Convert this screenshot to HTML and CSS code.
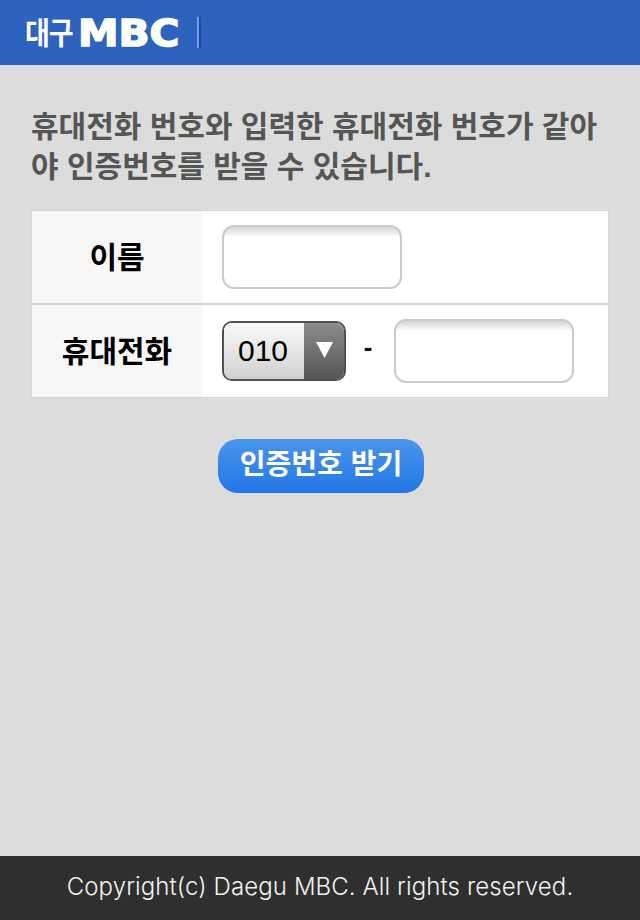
FILE: index.html
```html
<!DOCTYPE html>
<html lang="ko">
<head>
    <meta charset="UTF-8">
    <meta name="viewport" content="width=device-width, initial-scale=1.0">
    <title>대구MBC 인증번호</title>
    <link rel="stylesheet" href="styles.css">
</head>
<body>

    <div id="header">
        <div class="logo">
            <span class="logo-city">대구</span>
            <span class="logo-mbc">MBC</span>
        </div>
        <div class="logo-line"></div>
    </div>

    <div id="content">
        <p class="notice">휴대전화 번호와 입력한 휴대전화 번호가 같아야 인증번호를 받을 수 있습니다.</p>

        <div class="form-table">
            <div class="form-row">
                <div class="form-label">이름</div>
                <div class="form-field name-field">
                    <div class="text-input"></div>
                </div>
            </div>
            <div class="form-row">
                <div class="form-label">휴대전화</div>
                <div class="form-field phone-field">
                    <div class="select-box">
                        <span class="select-value">010</span>
                        <span class="select-arrow">
                            <svg width="17" height="16" viewBox="0 0 17 16"><polygon points="0,0 17,0 8.5,16" fill="#fff"/></svg>
                        </span>
                    </div>
                    <span class="dash">-</span>
                    <div class="text-input"></div>
                </div>
            </div>
        </div>

        <div class="actions">
            <a href="#" class="btn-auth">인증번호 받기</a>
        </div>
    </div>

    <div id="footer">Copyright(c) Daegu MBC. All rights reserved.</div>

</body>
</html>
```

FILE: styles.css
```css
html, body {
    height: 100%;
}

body {
    font-family: "Liberation Sans", "Noto Sans CJK KR", sans-serif;
    margin: 0;
    padding: 0;
    display: flex;
    flex-direction: column;
    background-color: #dcdcdc;
}

#header {
    height: 65px;
    background-color: #2d63bf;
    display: flex;
    align-items: center;
    padding-left: 25px;
    flex-shrink: 0;
}

.logo {
    display: flex;
    align-items: center;
    color: #fff;
    height: 30px;
    width: 172px;
}

.logo-city {
    font-size: 27px;
    font-weight: bold;
    letter-spacing: -1px;
    line-height: 30px;
    width: 53px;
    margin-top: 2px;
    transform: scaleY(1.15);
}

.logo-mbc {
    font-family: "DejaVu Sans", sans-serif;
    font-size: 37px;
    font-weight: bold;
    line-height: 30px;
    display: block;
    margin-top: 3px;
    transform: scaleX(1.1);
    transform-origin: left center;
    -webkit-text-stroke: 1.5px #fff;
}

.logo-line {
    width: 4px;
    height: 31px;
    background: linear-gradient(to right, #6b9cf0 50%, #1f4aa0 50%);
}

#content {
    flex: 1;
    padding: 42px 31px 0 31px;
}

.notice {
    margin: 0 0 23px 0;
    font-size: 30px;
    line-height: 40px;
    font-weight: bold;
    color: #555;
    word-break: break-all;
}

.form-table {
    width: 578px;
    background-color: #fff;
    border: 1px solid #d6d6d6;
    box-sizing: border-box;
}

.form-row {
    display: flex;
    height: 92px;
}

.form-row + .form-row {
    border-top: 2px solid #d6d6d6;
}

.form-label {
    width: 170px;
    box-sizing: border-box;
    padding-bottom: 5px;
    background-color: #f7f7f7;
    display: flex;
    align-items: center;
    justify-content: center;
    font-size: 30px;
    font-weight: bold;
    color: #000;
}

.form-field {
    flex: 1;
    display: flex;
    align-items: center;
    padding-left: 20px;
}

.text-input {
    width: 180px;
    height: 64px;
    box-sizing: border-box;
    background: linear-gradient(to bottom, #d4d4d4, #fff 10px);
    border: 2px solid #cbcbcb;
    border-radius: 12px;
}

.select-box {
    width: 124px;
    height: 60px;
    box-sizing: border-box;
    display: flex;
    border: 2px solid #505050;
    border-radius: 10px;
    overflow: hidden;
}

.select-value {
    flex: 1;
    background: linear-gradient(to bottom, #fafafa, #d0d0d0);
    font-size: 30px;
    color: #000;
    line-height: 55px;
    padding-left: 14px;
}

.select-arrow {
    width: 40px;
    background: linear-gradient(to bottom, #8c8c8c, #555);
    display: flex;
    justify-content: center;
    align-items: flex-start;
    padding-top: 19px;
    box-sizing: border-box;
}

.select-arrow svg {
    display: block;
}

.dash {
    width: 44px;
    margin-right: 4px;
    text-align: center;
    font-size: 26px;
    font-weight: bold;
    line-height: 26px;
    margin-top: -8px;
    color: #000;
}

.actions {
    display: flex;
    justify-content: center;
    margin-top: 41px;
    padding-left: 2px;
}

.btn-auth {
    display: block;
    width: 206px;
    height: 54px;
    border-radius: 20px;
    background: linear-gradient(to bottom, #4a95ea, #2277e4);
    color: #fff;
    font-size: 28px;
    font-weight: bold;
    line-height: 52px;
    text-align: center;
    text-decoration: none;
}

#footer {
    height: 64px;
    flex-shrink: 0;
    background-color: #2f2f2f;
    color: #f2f2f2;
    font-family: Inter, "Liberation Sans", sans-serif;
    font-weight: 300;
    font-size: 24px;
    letter-spacing: 0.1px;
    line-height: 62px;
    text-align: center;
}
```
